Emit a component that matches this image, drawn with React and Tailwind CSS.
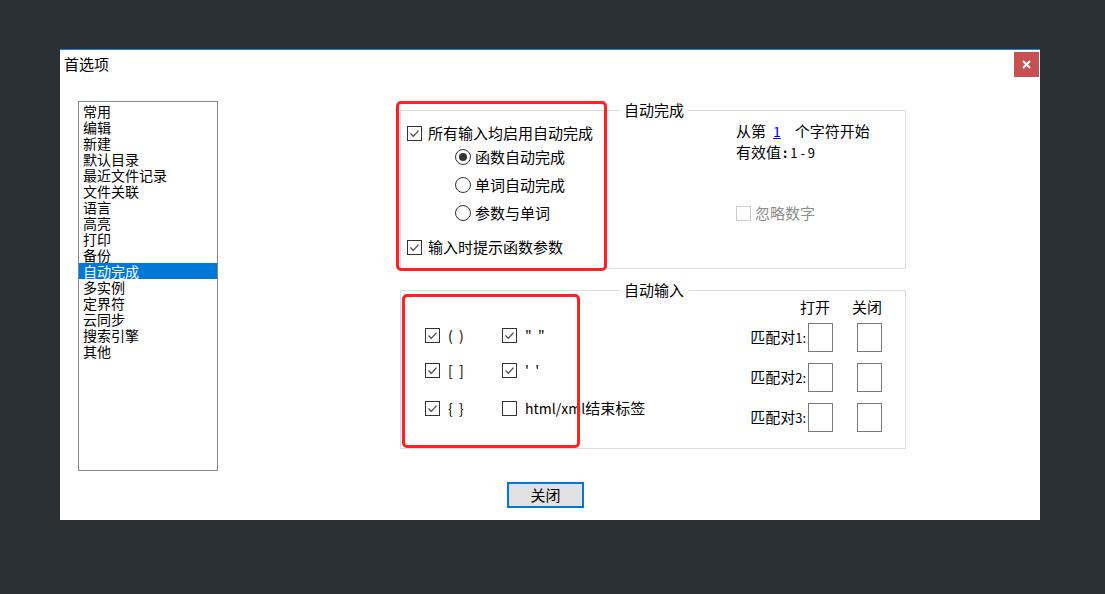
import React from 'react';

const font = "font-['Noto_Sans_CJK_SC','Microsoft_YaHei',sans-serif]";

function CheckBox({ checked, disabled }) {
  return (
    <span
      className={`inline-flex h-[15px] w-[15px] shrink-0 items-center justify-center border bg-white ${
        disabled ? 'border-[#cccccc]' : 'border-[#333333]'
      }`}
    >
      {checked && (
        <svg width="11" height="11" viewBox="0 0 11 11" fill="none">
          <path d="M1.5 5.5 L4.3 8.3 L9.5 2.6" stroke="#444" strokeWidth="1.2" />
        </svg>
      )}
    </span>
  );
}

function Radio({ checked }) {
  return (
    <span className="inline-flex h-[16px] w-[16px] shrink-0 items-center justify-center rounded-full border border-[#333333] bg-white">
      {checked && <span className="h-[8px] w-[8px] rounded-full bg-[#333333]" />}
    </span>
  );
}

const items = [
  '常用', '编辑', '新建', '默认目录', '最近文件记录', '文件关联', '语言', '高亮',
  '打印', '备份', '自动完成', '多实例', '定界符', '云同步', '搜索引擎', '其他',
];

function Group({ title, className, children }) {
  return (
    <div className={`relative border border-[#dcdcdc] ${className}`}>
      <span className="absolute left-[219px] top-[-11px] bg-white px-[4px] text-[15px] leading-[20px] text-black">
        {title}
      </span>
      {children}
    </div>
  );
}

function PairRow({ n }) {
  return (
    <div className="flex h-[29px] items-center">
      <span className="w-[62px] pr-[2px] text-right text-[15px] leading-[20px]">
        匹配对<span className="text-[13px]">{n}:</span>
      </span>
      <span className="h-[29px] w-[25px] border border-[#7a7a7a]" />
      <span className="ml-[24px] h-[29px] w-[25px] border border-[#7a7a7a]" />
    </div>
  );
}

function Bracket({ checked, children }) {
  return (
    <div className="flex h-[22px] w-[77px] items-center gap-[8px]">
      <CheckBox checked={checked} />
      <span className="whitespace-nowrap text-[14px] leading-[20px]">{children}</span>
    </div>
  );
}

export default function App() {
  return (
    <div className={`min-h-[594px] w-full bg-[#2a3033] pt-[49px] pl-[60px] ${font}`}>
      <div className="relative h-[471px] w-[980px] border-t border-[#2b7cd3] bg-white text-black">
        {/* title bar */}
        <div className="flex h-[32px] items-start justify-between">
          <span className="ml-[4px] mt-[4px] text-[15px] leading-[20px]">首选项</span>
          <button className="mr-[1px] mt-[2px] flex h-[25px] w-[25px] items-center justify-center bg-[#c75050]">
            <svg width="9" height="9" viewBox="0 0 9 9">
              <path d="M1 1 L8 8 M8 1 L1 8" stroke="#fff" strokeWidth="2" />
            </svg>
          </button>
        </div>

        <div className="flex pl-[18px] pt-[19px]">
          {/* list */}
          <div className="h-[370px] w-[140px] border border-[#828790] pt-[1px]">
            {items.map((t) => (
              <div
                key={t}
                className={`h-[16px] pl-[4px] text-[14px] leading-[16px] ${
                  t === '自动完成' ? 'bg-[#0078d7] text-white' : ''
                }`}
              >
                {t}
              </div>
            ))}
          </div>

          {/* right side */}
          <div className="ml-[182px] flex flex-col pt-[9px]">
            <Group title="自动完成" className="h-[159px] w-[506px]">
              <div className="flex">
                <div className="w-[335px] pl-[6px] text-[15px]">
                  <div className="mt-[12px] flex h-[20px] items-center gap-[6px]">
                    <CheckBox checked />
                    <span className="leading-[20px]">所有输入均启用自动完成</span>
                  </div>
                  <div className="mt-[4px] flex h-[20px] items-center gap-[4px] pl-[48px]">
                    <Radio checked />
                    <span className="leading-[20px]">函数自动完成</span>
                  </div>
                  <div className="mt-[8px] flex h-[20px] items-center gap-[4px] pl-[48px]">
                    <Radio />
                    <span className="leading-[20px]">单词自动完成</span>
                  </div>
                  <div className="mt-[8px] flex h-[20px] items-center gap-[4px] pl-[48px]">
                    <Radio />
                    <span className="leading-[20px]">参数与单词</span>
                  </div>
                  <div className="mt-[14px] flex h-[20px] items-center gap-[6px]">
                    <CheckBox checked />
                    <span className="leading-[20px]">输入时提示函数参数</span>
                  </div>
                </div>
                <div className="text-[15px]">
                  <div className="mt-[10px] flex h-[21px] items-center">
                    <span>从第</span>
                    <span className="ml-[7px] text-[14px] text-[#0000ff] underline">1</span>
                    <span className="ml-[14px]">个字符开始</span>
                  </div>
                  <div className="flex h-[21px] items-center">
                    <span>有效值</span>
                    <span className="ml-[2px] text-[13px] font-bold">:</span>
                    <span className="ml-[3px] text-[13px]">1 - 9</span>
                  </div>
                  <div className="mt-[40px] flex h-[20px] items-center gap-[4px] text-[#8d8d8d]">
                    <CheckBox disabled />
                    <span>忽略数字</span>
                  </div>
                </div>
              </div>
            </Group>

            <Group title="自动输入" className="mt-[21px] h-[159px] w-[506px]">
              <div className="flex">
                <div className="flex w-[345px] flex-col pl-[24px] pt-[33px]">
                  <div className="flex">
                    <Bracket checked>(&nbsp;&nbsp;)</Bracket>
                    <Bracket checked>"&nbsp;&nbsp;"</Bracket>
                  </div>
                  <div className="mt-[13px] flex">
                    <Bracket checked>[&nbsp;&nbsp;]</Bracket>
                    <Bracket checked>'&nbsp;&nbsp;'</Bracket>
                  </div>
                  <div className="mt-[16px] flex">
                    <Bracket checked>{'{'}&nbsp;&nbsp;{'}'}</Bracket>
                    <Bracket>
                      <span className="text-[14px]">html/xml</span>
                      <span className="text-[15px]">结束标签</span>
                    </Bracket>
                  </div>
                </div>
                <div className="flex flex-col">
                  <div className="mt-[6px] flex h-[20px] text-[15px] leading-[20px]">
                    <span className="ml-[54px]">打开</span>
                    <span className="ml-[22px]">关闭</span>
                  </div>
                  <div className="mt-[6px] flex flex-col gap-[11px]">
                    <PairRow n={1} />
                    <PairRow n={2} />
                    <PairRow n={3} />
                  </div>
                </div>
              </div>
            </Group>
          </div>
        </div>

        {/* close button */}
        <div className="ml-[447px] mt-[11px]">
          <button className="flex h-[26px] w-[77px] items-center justify-center border-2 border-[#0078d7] bg-[#e1e1e1] text-[15px] leading-[20px]">
            关闭
          </button>
        </div>

        {/* red annotation boxes */}
        <div className="pointer-events-none absolute left-[336px] top-[51px] h-[170px] w-[211px] rounded-[5px] border-[3px] border-[#ff2020]" />
        <div className="pointer-events-none absolute left-[342px] top-[244px] h-[154px] w-[178px] rounded-[5px] border-[3px] border-[#ff2020]" />
      </div>
    </div>
  );
}
